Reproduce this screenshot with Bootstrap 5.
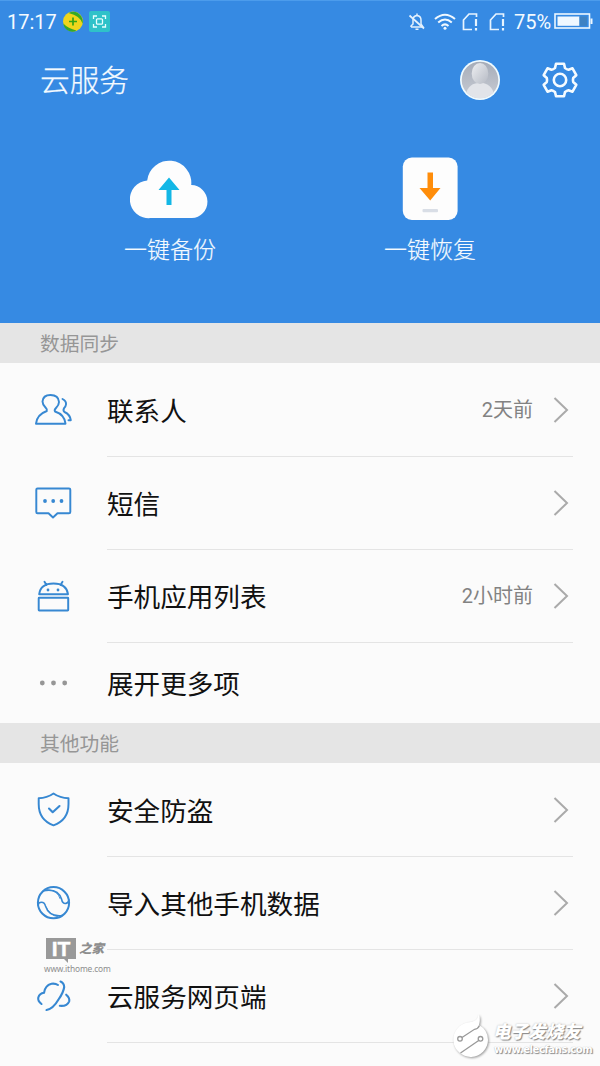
<!DOCTYPE html>
<html lang="zh-CN">
<head>
<meta charset="utf-8">
<meta name="viewport" content="width=device-width, initial-scale=1">
<title>云服务</title>
<link href="https://cdn.jsdelivr.net/npm/bootstrap@5.3.0/dist/css/bootstrap.min.css" rel="stylesheet">
<style>
body{font-family:Roboto,"Noto Sans CJK SC",sans-serif;background:#fbfbfb;color:#111;line-height:1;overflow:hidden}
svg{display:block;flex:none}
.phone{width:600px;height:1066px;overflow:hidden}
.hero{height:323px;background:#368ae3;color:#f4faff;box-shadow:inset 0 1px 0 #4c9cec}
.status{height:43px;padding:0 7px}
.clock{font-size:20px;width:50px;white-space:nowrap;padding-top:1px}
.pct{font-size:20px;width:37px;white-space:nowrap;padding-top:1px}
.topline{height:73px;padding:0 22px 0 40px}
.topline h1{font-family:"Noto Sans CJK SC",sans-serif;font-size:29.7px;font-weight:300;line-height:40px;padding-bottom:1px;-webkit-text-stroke:.25px}
.avatar{margin-right:42px}
.actions{padding:37px 40px 0}
.act{width:260px;font-family:"Noto Sans CJK SC",sans-serif;font-weight:300;font-size:23px;line-height:34px;-webkit-text-stroke:.2px}
.act svg{margin-bottom:8px}
.sect{height:40px;padding-left:40px;background:#e5e5e5;color:#969696;font-size:19.8px;font-family:"Noto Sans CJK SC",sans-serif}
.group{padding-top:.6px}
.item{height:93.1px;padding:0 27px 0 31px}
.item.more{height:80.1px}
.glyph{width:76px;height:100%}
.cell{height:100%;border-bottom:1px solid #e4e4e4}
.more .cell{border:0}
.label{font-family:"Noto Sans CJK SC",sans-serif;font-size:26.6px;line-height:40px}
.when{font-size:20px;line-height:28px;color:#828282;margin-right:20px;padding-top:1px}
.ln{fill:none;stroke:#3788d2;stroke-width:1.95;stroke-linecap:round;stroke-linejoin:round}
.wm{left:44px;top:938px;width:68px;color:#8e8e8e}
.wm-it{width:30px;height:21px;background:#999;color:#fff;font:bold 21px/22px "Liberation Sans",sans-serif;-webkit-text-stroke:.4px}
.wm-it::after{content:"";position:absolute;left:18px;top:21px;border-style:solid;border-width:0 4px 4px 0;border-color:transparent #999 transparent transparent}
.wm-home{font:italic 900 12.5px/20px "Noto Sans CJK SC",sans-serif;margin-left:3px}
.wm-url{font:8.4px/12px "Noto Sans","Open Sans",sans-serif;letter-spacing:-.15px;margin-top:4px;white-space:nowrap}
.wm2{left:449px;top:1009px;color:#fff}
.wm2 svg{filter:drop-shadow(1px 1px 1px #999)}
.wm2-name{font:italic 900 17.5px/18px "Noto Sans CJK SC",sans-serif;text-shadow:1px 1px 1px #888,0 0 2px #bbb;margin-top:13px;white-space:nowrap}
.wm2-url{font:bold 10px/10px "DejaVu Sans",sans-serif;letter-spacing:-.42px;text-shadow:1px 1px 1px #888,0 0 1px #aaa;margin-top:5px;white-space:nowrap}
</style>
</head>
<body>
<main class="phone position-relative">
<header class="hero">
  <div class="status d-flex align-items-center">
    <span class="clock">17:17</span>
    <svg width="22" height="22" viewBox="0 0 22 22" style="margin-left:5px"><circle cx="11" cy="10.500" r="10" fill="#f0d51c"/><path d="M6.500 2Q14-1.500 19 5Q21.500 9 20.500 12.500Q18.500 5 6.500 2ZM1.300 12.500Q6 17.500 14.500 19.500Q10 22 5.500 19.300Q2 17 1.300 12.500Z" fill="#35a928"/><path d="M11 6.500v8M7 10.500h8" stroke="#35a315" stroke-width="1.700"/></svg>
    <svg width="21" height="21" viewBox="0 0 21 21" style="margin-left:5px"><rect width="21" height="21" rx="2" fill="#2fc2c9"/><g fill="none" stroke="#e9ffff" stroke-width="1.300"><path d="M4.500 8V5h3.500M13 5h3.500v3M16.500 13v3h-3.500M8 16H4.500v-3"/><rect x="7.500" y="7.800" width="6" height="5.400" rx="1"/></g></svg>
    <svg class="ms-auto" width="18" height="20" viewBox="0 0 18 20" fill="none" stroke="#e4f1fd" stroke-width="1.500"><path d="M3 15V14L5 12V8Q5 4 9 3.500Q13 4 13 8V12L15 15H3M9 1.500v2M7.500 17.300h3"/><path d="M1.500 3.500L16 16.500" stroke-width="1.700"/></svg>
    <svg width="22" height="20" viewBox="0 0 22 20" fill="none" stroke="#f0f8ff" stroke-width="2" style="margin-left:8px"><path d="M1 7Q11-1.500 21 7M4.200 10.500Q11 4.500 17.800 10.500M7.500 14Q11 10.700 14.500 14"/><circle cx="11" cy="16.300" r="1.500" fill="#f0f8ff" stroke="none"/></svg>
    <svg width="17" height="20" viewBox="0 0 17 20" fill="none" stroke="#e7f4ff" stroke-width="1.700" style="margin-left:6px"><path d="M10 17.500H1.500V8L7 2H14.500V5"/><path d="M14 7v7M14 16v2.500" stroke-width="2.200"/></svg>
    <svg width="17" height="20" viewBox="0 0 17 20" fill="none" stroke="#e7f4ff" stroke-width="1.700" style="margin-left:10px"><path d="M10 17.500H1.500V8L7 2H14.500V5"/><path d="M14 7v7M14 16v2.500" stroke-width="2.200"/></svg>
    <span class="pct" style="margin-left:8px">75%</span>
    <svg width="39" height="18" viewBox="0 0 39 18" style="margin-left:3px"><rect x="1" y="1" width="34.500" height="14" fill="none" stroke="#edf7ff" stroke-width="1.600"/><rect x="3.500" y="3.500" width="22" height="9.300" fill="#f0f8ff"/><path d="M25.500 3.500h7.500v9.300h-7.500" fill="#3e82c3"/><path d="M37.500 5.500v5.500" stroke="#edf7ff" stroke-width="2"/></svg>
  </div>
  <div class="topline d-flex align-items-center">
    <h1 class="m-0 me-auto">云服务</h1>
    <svg class="avatar" width="40" height="40" viewBox="0 0 40 40"><defs><linearGradient id="ab" x2="0" y2="1"><stop stop-color="#a5abb7"/><stop offset="1" stop-color="#c9cdd5"/></linearGradient><linearGradient id="af" x2="1" y2="1"><stop stop-color="#eeeff2"/><stop offset="1" stop-color="#b5bac4"/></linearGradient><clipPath id="ac"><circle cx="20" cy="20" r="18.300"/></clipPath></defs><circle cx="20" cy="20" r="20" fill="#f0fbff"/><g clip-path="url(#ac)"><path fill="url(#ab)" d="M0 0h40v40H0z"/><path d="M5 40Q6 24 18 23h5Q34 25 35 40Z" fill="#e2e4e9"/><ellipse cx="20" cy="13.500" rx="8.300" ry="10.500" fill="url(#af)"/></g></svg>
    <svg width="36" height="36" viewBox="-18 -18 36 36" fill="none" stroke="#f5fbff" stroke-width="2.600" stroke-linejoin="round"><path d="M-4-16.300H4L5-12Q7.500-10.200 8.500-10.200L12.500-11.700L16.300-4.800L13.200-2Q12.700 0 13.200 2L16.300 4.800L12.500 11.700L8.500 10.200Q7.500 10.200 5 12L4 16.300H-4L-5 12Q-7.500 10.200-8.500 10.200L-12.500 11.700L-16.300 4.800L-13.200 2Q-12.700 0-13.200-2L-16.300-4.800L-12.500-11.700L-8.500-10.200Q-7.500-10.200-5-12Z"/><circle r="6.200"/></svg>
  </div>
  <div class="actions d-flex">
    <div class="act d-flex flex-column align-items-center">
      <svg width="80" height="70" viewBox="129 153 80 70"><path d="M149.500 217.600A18.850 18.850 0 0 1 146.500 180A22 22 0 0 1 190.500 184.600A16.510 16.510 0 0 1 191 217.600Z" fill="#fdfdfd" transform="translate(-.3 .5)"/><path d="M168 177.500l10.500 12.500h-8v15h-5v-15h-8z" fill="#13b7e6"/></svg>
      <span>一键备份</span>
    </div>
    <div class="act d-flex flex-column align-items-center">
      <svg width="56" height="70" viewBox="402 153 56 70"><rect x="402.800" y="157.500" width="54.800" height="62.500" rx="9" fill="#fdfdfd"/><path d="M427.500 172.500h5.500v15.500h7.500l-10.300 12.500l-10.700-12.500h8z" fill="#ff8d0a"/><rect x="422.500" y="209" width="15.500" height="3.200" rx="1" fill="#d9dee6"/></svg>
      <span>一键恢复</span>
    </div>
  </div>
</header>

<div class="sect d-flex align-items-center">数据同步</div>
<section class="group">
  <div class="item d-flex">
    <div class="glyph d-flex align-items-center"><svg width="44" height="44" viewBox="31 388.500 44 44" class="ln"><path d="M36 424.200Q37 415 46.800 411.500Q47.500 410 45.500 408Q42.500 405 42.500 402Q43 395.500 50.500 395.500Q58.500 395.500 59 402.500Q59 405.500 56 408.500Q54 410.500 55 412Q64.500 415 65.500 424.200Z"/><path d="M62.500 399.500Q66.500 401.500 66 405Q65.800 407 64 408.700Q62.800 411 64.500 412.500Q70 415 70.800 420.700H68.500"/></svg></div>
    <div class="cell d-flex align-items-center flex-grow-1"><span class="label me-auto">联系人</span><span class="when">2天前</span><svg width="20" height="28" viewBox="0 0 20 28" fill="none" stroke="#aaa" stroke-width="2"><path d="M1.500 2L14 14L1.500 26"/></svg></div>
  </div>
  <div class="item d-flex">
    <div class="glyph d-flex align-items-center"><svg width="44" height="44" viewBox="31 481.500 44 44" class="ln"><path d="M37.500 489H69Q70.300 489 70.300 490.200V512.500Q70.300 513.800 69 513.800H57.500L53 518L48.500 513.800H37.500Q36.300 513.800 36.300 512.500V490.200Q36.300 489 37.500 489Z"/><g fill="#3788d2" stroke="none"><circle cx="45" cy="501.500" r="1.900"/><circle cx="53.200" cy="501.500" r="1.900"/><circle cx="61.500" cy="501.500" r="1.900"/></g></svg></div>
    <div class="cell d-flex align-items-center flex-grow-1"><span class="label me-auto">短信</span><svg width="20" height="28" viewBox="0 0 20 28" fill="none" stroke="#aaa" stroke-width="2"><path d="M1.500 2L14 14L1.500 26"/></svg></div>
  </div>
  <div class="item d-flex">
    <div class="glyph d-flex align-items-center"><svg width="44" height="44" viewBox="31 574.500 44 44" class="ln"><path d="M39.200 594.700Q40.500 584 53.500 584Q66.500 584 68 594.700ZM46.500 585.500L44.500 582.300M60.500 585.500L62.500 582.300"/><rect x="38.700" y="598.300" width="29.500" height="12.700" rx=".5"/><g fill="#3788d2" stroke="none"><circle cx="48" cy="590.500" r="1.400"/><circle cx="58" cy="590.500" r="1.400"/></g></svg></div>
    <div class="cell d-flex align-items-center flex-grow-1"><span class="label me-auto">手机应用列表</span><span class="when">2小时前</span><svg width="20" height="28" viewBox="0 0 20 28" fill="none" stroke="#aaa" stroke-width="2"><path d="M1.500 2L14 14L1.500 26"/></svg></div>
  </div>
  <div class="item more d-flex">
    <div class="glyph d-flex align-items-center"><svg width="44" height="44" viewBox="31 661 44 44" fill="#969696"><circle cx="42.300" cy="683" r="2.400"/><circle cx="53.500" cy="683" r="2.400"/><circle cx="64.700" cy="683" r="2.400"/></svg></div>
    <div class="cell d-flex align-items-center flex-grow-1"><span class="label">展开更多项</span></div>
  </div>
</section>

<div class="sect d-flex align-items-center">其他功能</div>
<section class="group">
  <div class="item d-flex">
    <div class="glyph d-flex align-items-center"><svg width="44" height="44" viewBox="31 788 44 44" class="ln"><path d="M53.500 793.500Q60 798 68.500 798.300V804Q68.500 820 53.500 825.300Q38.700 820 38.700 804V798.300Q47 798 53.500 793.500Z"/><path d="M49 808.500L52.700 812.200L59.500 806" stroke-width="2.100"/></svg></div>
    <div class="cell d-flex align-items-center flex-grow-1"><span class="label me-auto">安全防盗</span><svg width="20" height="28" viewBox="0 0 20 28" fill="none" stroke="#aaa" stroke-width="2"><path d="M1.500 2L14 14L1.500 26"/></svg></div>
  </div>
  <div class="item d-flex">
    <div class="glyph d-flex align-items-center"><svg width="44" height="44" viewBox="31 881 44 44" class="ln"><circle cx="53.500" cy="902.700" r="15.600" stroke-width="2"/><path d="M43.500 890.800Q58 888 61.500 899Q62.500 903.700 65.500 903.500Q68.300 903 69 900M38 905Q38.500 902.200 41.500 902.200Q44.500 902.200 45.500 906Q49 917 62 915.500" stroke-width="1.600"/><path d="M47 889.500Q58 890.500 60 898.500M46.500 908Q50 915.500 58 916.800" stroke-width=".9"/></svg></div>
    <div class="cell d-flex align-items-center flex-grow-1"><span class="label me-auto">导入其他手机数据</span><svg width="20" height="28" viewBox="0 0 20 28" fill="none" stroke="#aaa" stroke-width="2"><path d="M1.500 2L14 14L1.500 26"/></svg></div>
  </div>
  <div class="item d-flex">
    <div class="glyph d-flex align-items-center"><svg width="44" height="44" viewBox="31 974.500 44 44" class="ln"><path d="M41.500 1004.500Q37.500 1001.500 38.300 998Q39.500 993.800 44 993.300Q45 986 51.500 984.200Q55.500 983.700 58 985.500M60.500 982Q64 983.500 64.200 987.500Q63.500 993 58.500 1000Q53 1009.500 46.500 1010.500M66.200 995.200Q70 998.500 69.200 1001.800Q67 1007 59.800 1006.300" stroke-width="2.100"/></svg></div>
    <div class="cell d-flex align-items-center flex-grow-1"><span class="label me-auto">云服务网页端</span><svg width="20" height="28" viewBox="0 0 20 28" fill="none" stroke="#aaa" stroke-width="2"><path d="M1.500 2L14 14L1.500 26"/></svg></div>
  </div>
</section>

<div class="wm position-absolute">
  <div class="d-flex position-relative" style="margin-left:2px"><span class="wm-it text-center">IT</span><span class="wm-home">之家</span></div>
  <div class="wm-url">www.ithome.com</div>
</div>
<div class="wm2 position-absolute d-flex">
  <svg width="44" height="54" viewBox="449 1009 44 54"><path d="M478 1014Q481 1018 479 1025Q488 1030 488 1040A17.300 17.300 0 1 1 468 1022.500Q479 1022 478 1014Z" fill="#fff"/><g fill="none" stroke="#999" stroke-width="1.300"><circle cx="460" cy="1038.800" r="2.300"/><path d="M462 1037.500L474.500 1029.300Q478 1029 479.500 1025.500"/><circle cx="480.500" cy="1038.800" r="2.300"/><path d="M478.700 1040.500L460.500 1053"/></g></svg>
  <div><div class="wm2-name">电子发烧友</div><div class="wm2-url" style="margin-left:1px">www.elecfans.com</div></div>
</div>
</main>
<script src="https://cdn.jsdelivr.net/npm/bootstrap@5.3.0/dist/js/bootstrap.bundle.min.js"></script>
</body>
</html>
